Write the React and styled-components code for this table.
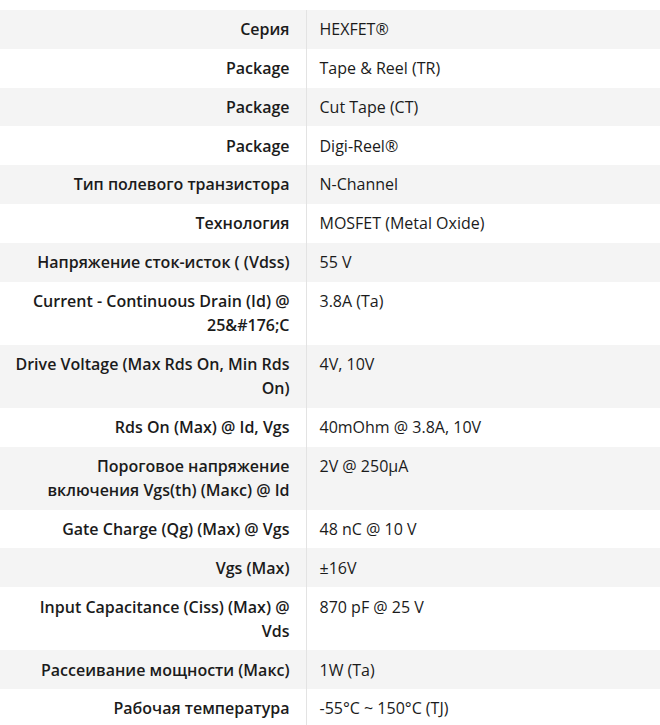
import React from "react";
import styled, { createGlobalStyle } from "styled-components";

const Global = createGlobalStyle`
  html, body { margin: 0; padding: 0; background: #fff; }
  body { font-family: "Open Sans", "Noto Sans", sans-serif; color: #1b1b1b; }
`;

const Table = styled.table`
  width: 660px;
  margin-top: 10px;
  border-collapse: collapse;
  font-size: 16px;
  line-height: 24.3px;
`;

const Row = styled.tr`
  background: ${(p) => (p.$shade ? "#f4f4f4" : "#ffffff")};
`;

const Label = styled.th`
  width: 306px;
  box-sizing: border-box;
  padding: 7.25px 16px 7.25px 10px;
  text-align: right;
  vertical-align: top;
  font-weight: 600;
  border-right: 1px solid #e3e3e3;
`;

const Value = styled.td`
  padding: 7.25px 10px 7.25px 13px;
  text-align: left;
  vertical-align: top;
  font-weight: 400;
`;

const rows = [
  ["Серия", "HEXFET®"],
  ["Package", "Tape & Reel (TR)"],
  ["Package", "Cut Tape (CT)"],
  ["Package", "Digi-Reel®"],
  ["Тип полевого транзистора", "N-Channel"],
  ["Технология", "MOSFET (Metal Oxide)"],
  ["Напряжение сток-исток ( (Vdss)", "55 V"],
  ["Current - Continuous Drain (Id) @ 25&#176;C", "3.8A (Ta)"],
  ["Drive Voltage (Max Rds On, Min Rds On)", "4V, 10V"],
  ["Rds On (Max) @ Id, Vgs", "40mOhm @ 3.8A, 10V"],
  ["Пороговое напряжение включения Vgs(th) (Макс) @ Id", "2V @ 250µA"],
  ["Gate Charge (Qg) (Max) @ Vgs", "48 nC @ 10 V"],
  ["Vgs (Max)", "±16V"],
  ["Input Capacitance (Ciss) (Max) @ Vds", "870 pF @ 25 V"],
  ["Рассеивание мощности (Макс)", "1W (Ta)"],
  ["Рабочая температура", "-55°C ~ 150°C (TJ)"],
];

export default function App() {
  return (
    <>
      <Global />
      <Table>
        <tbody>
          {rows.map(([k, v], i) => (
            <Row key={i} $shade={i % 2 === 0}>
              <Label>{k}</Label>
              <Value>{v}</Value>
            </Row>
          ))}
        </tbody>
      </Table>
    </>
  );
}
